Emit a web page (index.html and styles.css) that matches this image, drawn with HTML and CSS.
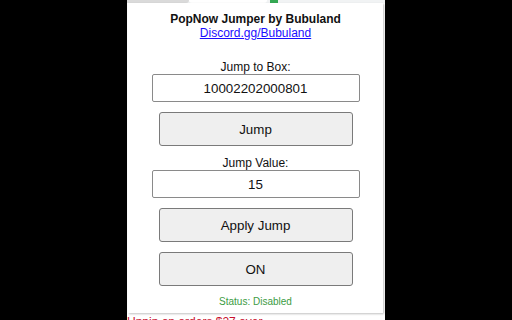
FILE: index.html
```html
<!DOCTYPE html>
<html>
<head>
<meta charset="utf-8">
<link rel="stylesheet" href="styles.css">
</head>
<body>
<div class="stage">
  <div class="tabbar">
    <div class="tab-left"></div>
    <div class="tab-mid"></div>
    <div class="tab-green"></div>
  </div>
  <div class="popup">
    <div class="title">PopNow Jumper by Bubuland</div>
    <a class="link" href="#">Discord.gg/Bubuland</a>
    <div class="label label-first">Jump to Box:</div>
    <input class="field" type="text" value="10002202000801">
    <button class="btn">Jump</button>
    <div class="label">Jump Value:</div>
    <input class="field" type="text" value="15">
    <button class="btn">Apply Jump</button>
    <button class="btn">ON</button>
    <div class="status">Status: Disabled</div>
  </div>
  <div class="behind">Unpin on orders $27 over</div>
</div>
</body>
</html>
```

FILE: styles.css
```css
html, body {
  margin: 0;
  padding: 0;
  height: 100%;
}
body {
  background: #000;
  display: flex;
  justify-content: center;
  font-family: "Liberation Sans", Arial, sans-serif;
  overflow: hidden;
}
.stage {
  width: 258px;
  height: 320px;
  background: #fff;
  overflow: hidden;
  display: flex;
  flex-direction: column;
}
.tabbar {
  height: 3px;
  display: flex;
  flex: none;
  background: #f1f3f4;
}
.tab-left {
  width: 62px;
  background: #dadada;
  border-bottom-right-radius: 3px;
}
.tab-mid {
  width: 78px;
  background: #fff;
  border-bottom-left-radius: 6px;
  border-bottom-right-radius: 6px;
}
.tab-green {
  width: 8px;
  margin-left: 3px;
  background: #34a853;
}
.popup {
  margin-left: 1px;
  width: 255px;
  height: 310px;
  flex: none;
  background: #fff;
  box-shadow: 1px 1px 2px rgba(0,0,0,0.25);
  display: flex;
  flex-direction: column;
  align-items: center;
  box-sizing: border-box;
  padding-top: 9px;
}
.title {
  font-weight: bold;
  font-size: 12px;
  line-height: 14px;
  color: #111;
}
.link {
  font-size: 12px;
  line-height: 14px;
  color: #1a0dff;
  text-decoration: underline;
}
.label {
  font-size: 12px;
  line-height: 14px;
  color: #111;
  margin-top: 10px;
}
.label-first {
  margin-top: 20px;
}
.field {
  width: 208px;
  height: 28px;
  box-sizing: border-box;
  border: 1px solid #8a8a8a;
  border-radius: 2px;
  font-family: "Liberation Sans", Arial, sans-serif;
  font-size: 13.33px;
  color: #111;
  text-align: center;
  padding: 0;
  margin: 0;
  background: #fff;
}
.btn {
  width: 194px;
  height: 34px;
  box-sizing: border-box;
  margin: 10px 0 0;
  border: 1px solid #7a7a7a;
  border-radius: 3px;
  background: #efefef;
  font-family: "Liberation Sans", Arial, sans-serif;
  font-size: 13.33px;
  color: #111;
  padding: 0;
}
.status {
  margin-top: 10px;
  font-size: 10px;
  line-height: 12px;
  color: #3c9c44;
}
.behind {
  margin-top: 2px;
  font-size: 12px;
  line-height: 14px;
  color: #c8102e;
  white-space: nowrap;
}
```
